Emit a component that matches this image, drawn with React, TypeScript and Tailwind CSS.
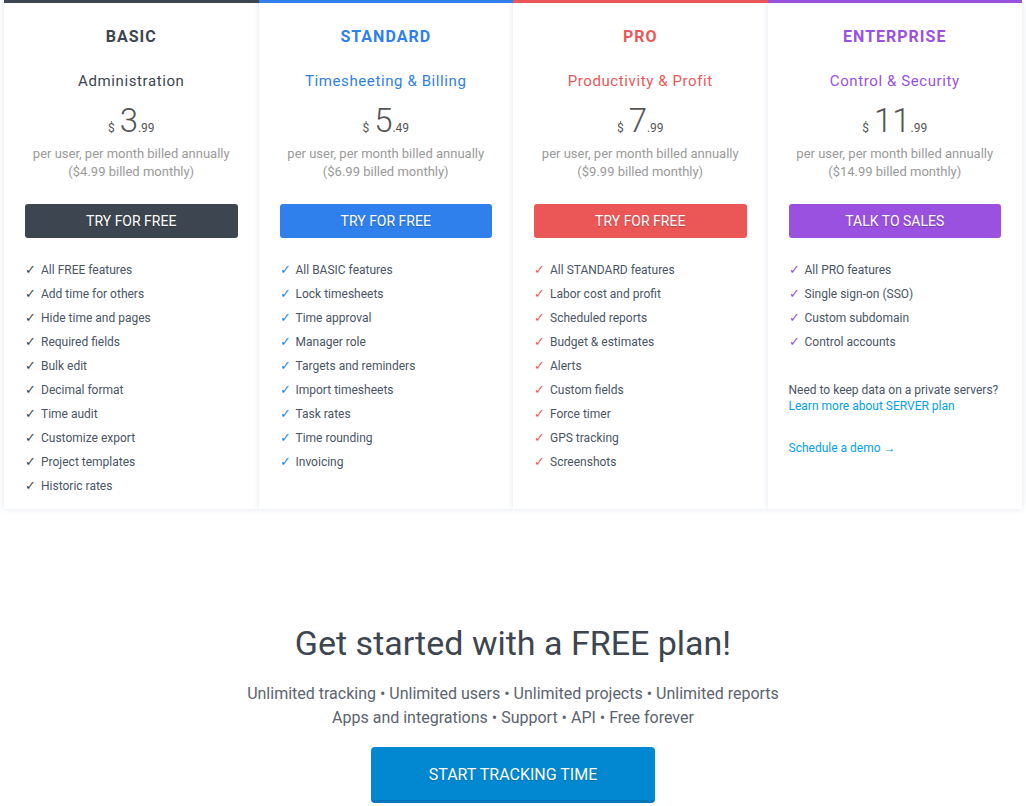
import React from "react";

type Plan = {
    name: string;
    tagline: string;
    whole: string;
    cents: string;
    monthly: string;
    cta: string;
    bar: string;
    text: string;
    btn: string;
    features: string[];
};

const plans: Plan[] = [
    {
        name: "BASIC",
        tagline: "Administration",
        whole: "3",
        cents: ".99",
        monthly: "($4.99 billed monthly)",
        cta: "TRY FOR FREE",
        bar: "border-t-[#3d4650]",
        text: "text-[#3d4650]",
        btn: "bg-[#3d4650]",
        features: [
            "All FREE features",
            "Add time for others",
            "Hide time and pages",
            "Required fields",
            "Bulk edit",
            "Decimal format",
            "Time audit",
            "Customize export",
            "Project templates",
            "Historic rates",
        ],
    },
    {
        name: "STANDARD",
        tagline: "Timesheeting & Billing",
        whole: "5",
        cents: ".49",
        monthly: "($6.99 billed monthly)",
        cta: "TRY FOR FREE",
        bar: "border-t-[#2f80ed]",
        text: "text-[#2f80ed]",
        btn: "bg-[#2f80ed]",
        features: [
            "All BASIC features",
            "Lock timesheets",
            "Time approval",
            "Manager role",
            "Targets and reminders",
            "Import timesheets",
            "Task rates",
            "Time rounding",
            "Invoicing",
        ],
    },
    {
        name: "PRO",
        tagline: "Productivity & Profit",
        whole: "7",
        cents: ".99",
        monthly: "($9.99 billed monthly)",
        cta: "TRY FOR FREE",
        bar: "border-t-[#eb5757]",
        text: "text-[#eb5757]",
        btn: "bg-[#eb5757]",
        features: [
            "All STANDARD features",
            "Labor cost and profit",
            "Scheduled reports",
            "Budget & estimates",
            "Alerts",
            "Custom fields",
            "Force timer",
            "GPS tracking",
            "Screenshots",
        ],
    },
    {
        name: "ENTERPRISE",
        tagline: "Control & Security",
        whole: "11",
        cents: ".99",
        monthly: "($14.99 billed monthly)",
        cta: "TALK TO SALES",
        bar: "border-t-[#9b51e0]",
        text: "text-[#9b51e0]",
        btn: "bg-[#9b51e0]",
        features: [
            "All PRO features",
            "Single sign-on (SSO)",
            "Custom subdomain",
            "Control accounts",
        ],
    },
];

const PlanCard = ({ plan, last }: { plan: Plan; last: boolean }) => (
    <div
        className={`bg-white border-t-[3px] ${plan.bar} shadow-[0_0_6px_rgba(30,70,130,0.13)] px-[21px] pt-[22px] pb-[11px] flex flex-col`}
    >
        <h2 className={`text-center text-[16px] leading-6 font-bold tracking-[1px] ${plan.text}`}>
            {plan.name}
        </h2>
        <div className={`mt-[22px] text-center text-[15px] leading-5 tracking-[0.6px] ${plan.text}`}>
            {plan.tagline}
        </div>
        <div className="mt-[12px] flex items-baseline justify-center text-[#555] h-9">
            <span className="text-[12px] mr-[5px]">$</span>
            <span className="text-[33px] leading-9 font-light">{plan.whole}</span>
            <span className="text-[12px]">{plan.cents}</span>
        </div>
        <div className="mt-[6px] text-center text-[13px] leading-[18px] text-[#9a9a9a]">
            <div>per user, per month billed annually</div>
            <div>{plan.monthly}</div>
        </div>
        <button
            className={`mt-[23px] h-[34px] w-full rounded-[3px] text-white text-[14px] [text-shadow:0_1px_1px_rgba(0,0,0,0.25)] ${plan.btn}`}
        >
            {plan.cta}
        </button>
        <ul className="mt-5">
            {plan.features.map((f) => (
                <li key={f} className="flex items-center h-6 text-[12px] text-[#4a5565]">
                    <span className={`w-3 mr-1 text-[13px] ${plan.name === "BASIC" ? "text-[#3d4650]" : plan.text}`}>
                        ✓
                    </span>
                    {f}
                </li>
            ))}
        </ul>
        {last && (
            <div className="text-[12px] leading-4">
                <p className="mt-7 text-[#4a5565]">Need to keep data on a private servers?</p>
                <a className="text-[#03a0e6]">Learn more about SERVER plan</a>
                <p className="mt-[26px]">
                    <a className="text-[#03a0e6]">Schedule a demo →</a>
                </p>
            </div>
        )}
    </div>
);

export default function App() {
    return (
        <div className="min-h-screen bg-white font-['Roboto',sans-serif]">
            <div className="grid grid-cols-4 px-1">
                {plans.map((p, i) => (
                    <PlanCard key={p.name} plan={p} last={i === plans.length - 1} />
                ))}
            </div>
            <div className="mt-[114px] flex flex-col items-center">
                <h1 className="text-[34px] leading-10 text-[#3d4650]">Get started with a FREE plan!</h1>
                <div className="mt-[19px] text-center text-[16px] leading-6 text-[#5b6470]">
                    <div>Unlimited tracking • Unlimited users • Unlimited projects • Unlimited reports</div>
                    <div>Apps and integrations • Support • API • Free forever</div>
                </div>
                <button className="mt-[17px] h-14 w-[284px] rounded-[4px] bg-[#0288d1] border-b-[3px] border-b-[#0277bd] text-white text-[16px] pt-[2px] [text-shadow:0_1px_1px_rgba(0,0,0,0.2)]">
                    START TRACKING TIME
                </button>
            </div>
        </div>
    );
}
